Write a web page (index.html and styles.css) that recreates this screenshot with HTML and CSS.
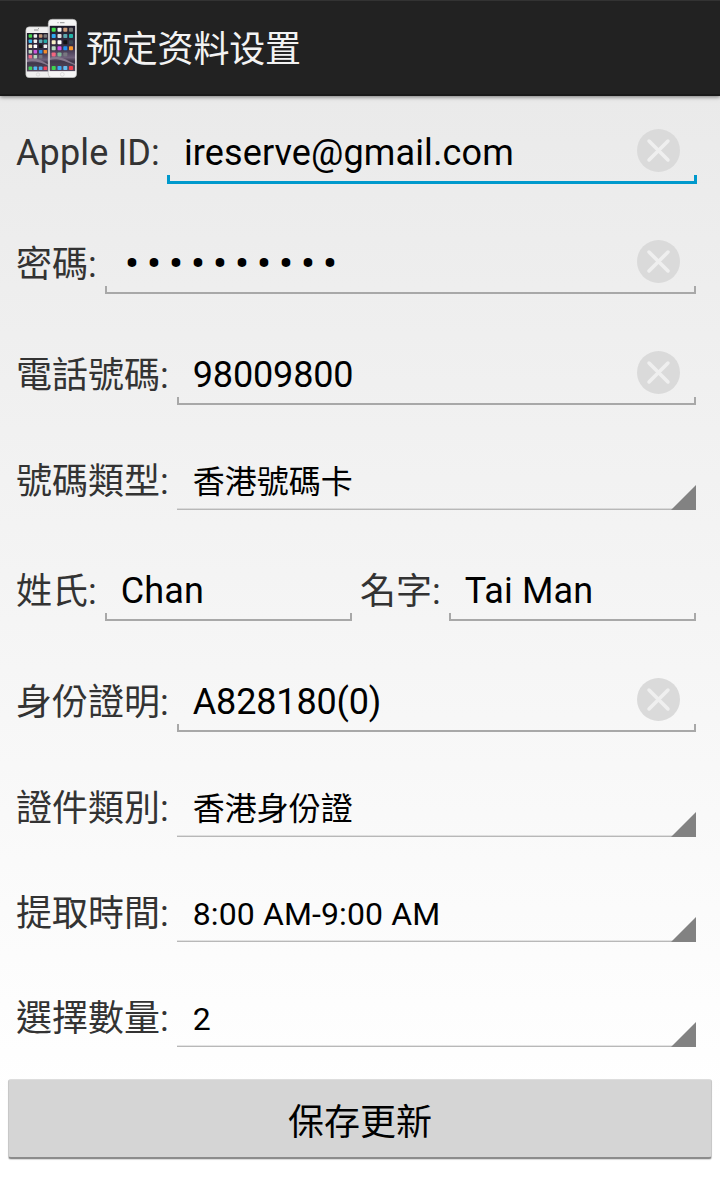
FILE: index.html
```html
<!DOCTYPE html>
<html lang="zh-Hant">
<head>
  <meta charset="UTF-8" />
  <title>预定资料设置</title>
  <link rel="stylesheet" href="styles.css">
</head>
<body>

  <header class="action-bar">
    <svg class="app-icon" width="52" height="60" viewBox="0 0 52 60">
      <defs>
        <linearGradient id="wall" x1="0" y1="0" x2="0" y2="1">
          <stop offset="0" stop-color="#1d1a28" />
          <stop offset="0.5" stop-color="#3b3249" />
          <stop offset="0.7" stop-color="#6f617b" />
          <stop offset="0.78" stop-color="#40374a" />
          <stop offset="1" stop-color="#574a5e" />
        </linearGradient>
      </defs>
      <!-- small phone -->
      <rect x="0.8" y="8.8" width="27" height="51" rx="3.6" fill="#efefef" stroke="#aaa" stroke-width="0.5" />
      <rect x="1.9" y="15" width="23" height="38.4" fill="url(#wall)" />
      <path d="M2 42 C8 39 14 40 24 47 V48 C15 44 8 42 2 44z" fill="#85778c" />
      <path d="M9 12h4.5M13 10.5h.8" stroke="#777" stroke-width="0.8" />
      <circle cx="13" cy="56.5" r="1.7" fill="none" stroke="#ccc" stroke-width="0.6" />
      <g>
        <rect x="3.6" y="16.2" width="3.5" height="3.5" rx="0.7" fill="#43d34e" />
        <rect x="8.6" y="16.2" width="3.5" height="3.5" rx="0.7" fill="#eee" />
        <rect x="13.9" y="16.2" width="3.5" height="3.5" rx="0.7" fill="#c19776" />
        <rect x="18.6" y="16.2" width="3.5" height="3.5" rx="0.7" fill="#777" />
        <rect x="3.6" y="21.5" width="3.5" height="3.5" rx="0.7" fill="#39b9ee" />
        <rect x="8.6" y="21.5" width="3.5" height="3.5" rx="0.7" fill="#eee" />
        <rect x="13.9" y="21.5" width="3.5" height="3.5" rx="0.7" fill="#62aeb5" />
        <rect x="18.6" y="21.5" width="3.5" height="3.5" rx="0.7" fill="#27a9a5" />
        <rect x="3.6" y="26.6" width="3.5" height="3.5" rx="0.7" fill="#f5eec7" />
        <rect x="8.6" y="26.6" width="3.5" height="3.5" rx="0.7" fill="#fff" />
        <rect x="13.9" y="26.6" width="3.5" height="3.5" rx="0.7" fill="#151515" />
        <rect x="18.6" y="26.6" width="3.5" height="3.5" rx="0.7" fill="#eee" />
        <rect x="3.6" y="31.9" width="3.5" height="3.5" rx="0.7" fill="#b9d6bc" />
        <rect x="8.6" y="31.9" width="3.5" height="3.5" rx="0.7" fill="#cb58db" />
        <rect x="13.9" y="31.9" width="3.5" height="3.5" rx="0.7" fill="#2b91e8" />
        <rect x="18.6" y="31.9" width="3.5" height="3.5" rx="0.7" fill="#f48b2b" />
        <rect x="3.6" y="36.9" width="3.5" height="3.5" rx="0.7" fill="#f26b87" />
        <rect x="8.6" y="36.9" width="3.5" height="3.5" rx="0.7" fill="#b8d8c0" />
        <rect x="13.9" y="36.9" width="3.5" height="3.5" rx="0.7" fill="#777780" />
        <rect x="3.6" y="48.6" width="3.5" height="3.5" rx="0.7" fill="#43cf58" />
        <rect x="8.6" y="48.6" width="3.5" height="3.5" rx="0.7" fill="#54b9f4" />
        <rect x="13.9" y="48.6" width="3.5" height="3.5" rx="0.7" fill="#4ea9e8" />
        <rect x="18.6" y="48.6" width="3.5" height="3.5" rx="0.7" fill="#ee4257" />
      </g>
      <!-- large phone -->
      <rect x="23.2" y="1.2" width="28.5" height="58.6" rx="4" fill="#f6f6f6" stroke="#aaa" stroke-width="0.5" />
      <rect x="24.7" y="7.8" width="25.5" height="45.3" fill="url(#wall)" />
      <path d="M25 40 C31 37 37 39 50 46 V47.500 C40 43 32 40 25 42z" fill="#85778c" />
      <path d="M32.5 4.7h1M35 4.7h4.5" stroke="#777" stroke-width="0.8" />
      <circle cx="37.3" cy="56.4" r="1.9" fill="none" stroke="#ccc" stroke-width="0.6" />
      <g>
        <rect x="26.7" y="9.8" width="4" height="4" rx="0.8" fill="#3edb48" />
        <rect x="32.5" y="9.8" width="4" height="4" rx="0.8" fill="#f4f4f4" />
        <rect x="38.3" y="9.8" width="4" height="4" rx="0.8" fill="#cf9d78" />
        <rect x="44" y="9.8" width="4" height="4" rx="0.8" fill="#777" />
        <rect x="26.7" y="16" width="4" height="4" rx="0.8" fill="#2fa8ef" />
        <rect x="32.5" y="16" width="4" height="4" rx="0.8" fill="#ddd" />
        <rect x="38.3" y="16" width="4" height="4" rx="0.8" fill="#5da7b0" />
        <rect x="44" y="16" width="4" height="4" rx="0.8" fill="#22b3a8" />
        <rect x="26.7" y="22.3" width="4" height="4" rx="0.8" fill="#f7efc5" />
        <rect x="32.5" y="22.3" width="4" height="4" rx="0.8" fill="#fff" />
        <rect x="38.3" y="22.3" width="4" height="4" rx="0.8" fill="#111" />
        <rect x="44" y="22.3" width="4" height="4" rx="0.8" fill="#3b4652" />
        <rect x="26.7" y="28.3" width="4" height="4" rx="0.8" fill="#b7d9bf" />
        <rect x="32.5" y="28.3" width="4" height="4" rx="0.8" fill="#d24fdf" />
        <rect x="38.3" y="28.3" width="4" height="4" rx="0.8" fill="#2492ee" />
        <rect x="44" y="28.3" width="4" height="4" rx="0.8" fill="#fa962b" />
        <rect x="26.7" y="34.4" width="4" height="4" rx="0.8" fill="#f4667f" />
        <rect x="32.5" y="34.4" width="4" height="4" rx="0.8" fill="#7fb99a" />
        <rect x="38.3" y="34.4" width="4" height="4" rx="0.8" fill="#777780" />
        <rect x="26.7" y="48" width="4" height="4" rx="0.8" fill="#3fd44e" />
        <rect x="32.5" y="48" width="4" height="4" rx="0.8" fill="#3ba8f2" />
        <rect x="38.3" y="48" width="4" height="4" rx="0.8" fill="#69bdf0" />
        <rect x="44" y="48" width="4" height="4" rx="0.8" fill="#f2404f" />
      </g>
    </svg>
    <h1 class="title">预定资料设置</h1>
  </header>

  <main class="form">
    <div class="row">
      <span class="label latin">Apple ID:</span>
      <div class="field focused">
        <span class="value latin">ireserve@gmail.com</span>
        <svg class="clear" width="43" height="43" viewBox="0 0 43 43"><circle cx="21.5" cy="21.5" r="21.5" /><path d="M12 12l19 19M31 12l-19 19" /></svg>
      </div>
    </div>

    <div class="row">
      <span class="label">密碼:</span>
      <div class="field">
        <span class="value password">••••••••••</span>
        <svg class="clear" width="43" height="43" viewBox="0 0 43 43"><circle cx="21.5" cy="21.5" r="21.5" /><path d="M12 12l19 19M31 12l-19 19" /></svg>
      </div>
    </div>

    <div class="row">
      <span class="label">電話號碼:</span>
      <div class="field">
        <span class="value digits">98009800</span>
        <svg class="clear" width="43" height="43" viewBox="0 0 43 43"><circle cx="21.5" cy="21.5" r="21.5" /><path d="M12 12l19 19M31 12l-19 19" /></svg>
      </div>
    </div>

    <div class="row row-spinner">
      <span class="label">號碼類型:</span>
      <div class="spinner"><span class="value">香港號碼卡</span></div>
    </div>

    <div class="row">
      <span class="label">姓氏:</span>
      <div class="field"><span class="value latin">Chan</span></div>
      <span class="label">名字:</span>
      <div class="field"><span class="value latin">Tai Man</span></div>
    </div>

    <div class="row">
      <span class="label">身份證明:</span>
      <div class="field">
        <span class="value digits">A828180(0)</span>
        <svg class="clear" width="43" height="43" viewBox="0 0 43 43"><circle cx="21.5" cy="21.5" r="21.5" /><path d="M12 12l19 19M31 12l-19 19" /></svg>
      </div>
    </div>

    <div class="row row-spinner">
      <span class="label">證件類別:</span>
      <div class="spinner"><span class="value">香港身份證</span></div>
    </div>

    <div class="row row-spinner">
      <span class="label">提取時間:</span>
      <div class="spinner"><span class="value latin">8:00 AM-9:00 AM</span></div>
    </div>

    <div class="row row-spinner">
      <span class="label">選擇數量:</span>
      <div class="spinner"><span class="value">2</span></div>
    </div>
  </main>

  <button class="save">保存更新</button>

</body>
</html>
```
FILE: styles.css
```css
*, *::after {
  box-sizing: border-box;
}
html, body {
  margin: 0; padding: 0;
}
body {
  min-height: 1182px;
  font-family: Roboto, "Noto Sans CJK TC", sans-serif;
  font-size: 36px;
  color: #000;
  background: linear-gradient(#e8e8e8, #fff 1100px);
}
.action-bar {
  display: flex;
  align-items: center;
  gap: 9px;
  height: 96px;
  padding-left: 25px;
  background: #222;
  border-top: 1px solid #333;
  border-bottom: 2px solid #1a1a1a;
  box-shadow: 0 1px 4px rgba(0,0,0,0.5);
}
.app-icon {
  display: block;
}
.title {
  margin: 0;
  padding-top: 4px;
  font-family: Roboto, "Noto Sans CJK SC", sans-serif;
  font-size: 36px;
  font-weight: normal;
  line-height: 60px;
  letter-spacing: -0.2px;
  color: #f3f3f3;
}
.form {
  padding: 27px 24px 0 16px;
}
.row {
  display: flex;
  gap: 8px;
  height: 60px;
  line-height: 60px;
  margin-bottom: 51px;
}
.row:has(+ .row-spinner) {
  margin-bottom: 45px;
}
.row:last-child {
  margin-bottom: 0;
}
.label {
  line-height: 62px;
  color: #333;
  white-space: nowrap;
}
.label.latin {
  line-height: 60px;
}
.row-spinner, .row-spinner .label {
  line-height: 64px;
}
.field, .spinner {
  position: relative;
  flex: 1 1 0;
  display: flex;
  justify-content: space-between;
  padding: 0 16px;
}
.field::after {
  content: "";
  position: absolute;
  left: 0; right: 0; bottom: 0;
  height: 8px;
  border: 2px solid #a8a8a8;
  border-top: none;
}
.focused::after {
  left: -1px; right: -1px; bottom: -1px;
  height: 9px;
  border: 3px solid #0099cc;
  border-top: none;
}
.value {
  white-space: nowrap;
}
.latin {
  letter-spacing: 0.12px;
}
.digits {
  letter-spacing: -0.15px;
}
.password {
  padding-left: 4px;
  font-size: 43px;
  line-height: 58px;
  letter-spacing: 7.5px;
}
.clear {
  margin-top: 6px;
}
.clear circle {
  fill: #dadada;
}
.clear path {
  stroke: #efefef;
  stroke-width: 3.5;
  stroke-linecap: round;
}
.spinner {
  font-size: 32px;
  border-bottom: 1px solid #b8b8b8;
  box-shadow: inset 0 -1px 0 rgba(0,0,0,0.1);
}
.spinner::after {
  content: "";
  position: absolute;
  right: 0; bottom: -1px;
  width: 25px; height: 25px;
  background: #828282;
  clip-path: polygon(100% 0, 100% 100%, 0 100%);
}
.save {
  display: block;
  width: 704px;
  height: 80px;
  margin: 32px auto 0;
  padding: 0;
  border: 1px solid #c8c8c8;
  border-top-color: #ddd;
  border-bottom: 2px solid #8c8c8c;
  border-radius: 3px;
  background: #d5d5d5;
  box-shadow: 0 1px 1px rgba(0,0,0,0.15);
  font-family: inherit;
  font-size: 36px;
  color: #000;
}
```
